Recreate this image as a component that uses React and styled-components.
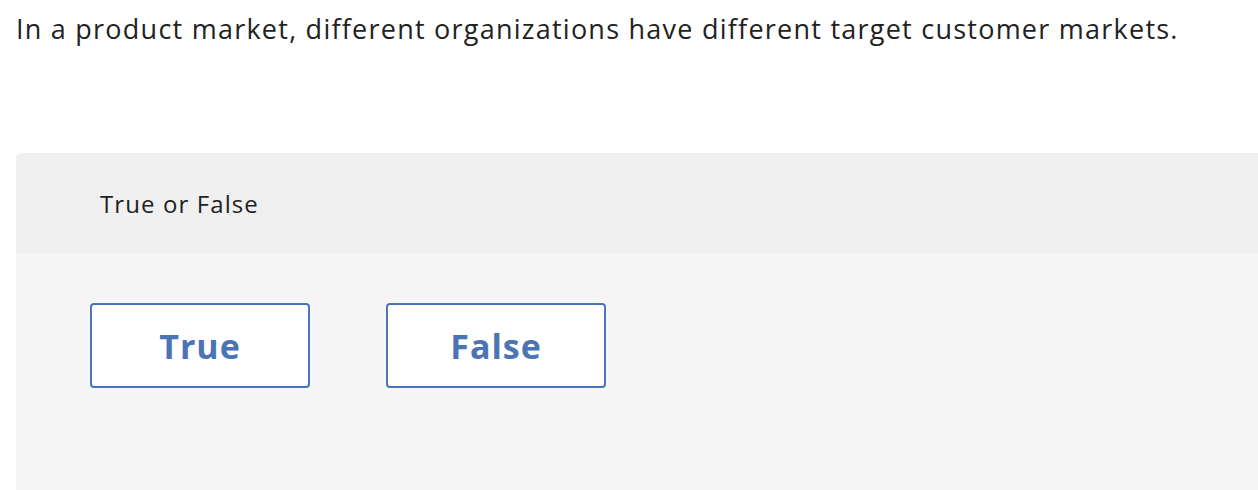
import React from 'react';
import styled, { createGlobalStyle } from 'styled-components';

const GlobalStyle = createGlobalStyle`
    html, body {
        margin: 0;
        padding: 0;
        background: #ffffff;
        overflow: hidden;
    }
    body {
        font-family: "Open Sans", "Liberation Sans", sans-serif;
        font-variant-ligatures: none;
        color: #222222;
    }
`;

const Page = styled.main`
    width: 1258px;
    height: 490px;
    overflow: hidden;
`;

const Prompt = styled.p`
    margin: 0;
    padding: 11px 0 0 16px;
    font-size: 27px;
    letter-spacing: 1.24px;
    line-height: 36px;
    color: #222222;
    white-space: nowrap;
`;

const Card = styled.section`
    margin: 106px 0 0 16px;
    width: 1300px;
    height: 400px;
    border-radius: 6px 0 0 0;
    overflow: hidden;
    background: #f5f5f5;
`;

const CardHeader = styled.header`
    height: 100px;
    background: #f0f0f0;
    display: flex;
    align-items: center;
    padding-left: 84px;
    font-size: 24px;
    letter-spacing: 1.1px;
    color: #222222;
`;

const Choices = styled.div`
    display: flex;
    gap: 76px;
    padding: 50px 0 0 74px;
`;

const Choice = styled.button`
    width: 220px;
    height: 85px;
    box-sizing: border-box;
    border: 2px solid #4a76b8;
    border-radius: 4px;
    background: #ffffff;
    color: #4a74b6;
    font-family: "Open Sans", "Liberation Sans", sans-serif;
    font-weight: 700;
    font-size: 34px;
    letter-spacing: 1px;
    cursor: pointer;
    padding: 0;
`;

export default function App() {
    const options = ['True', 'False'];
    return (
        <Page>
            <GlobalStyle />
            <Prompt>In a product market, different organizations have different target customer markets.</Prompt>
            <Card>
                <CardHeader>True or False</CardHeader>
                <Choices>
                    {options.map(option => <Choice key={option}>{option}</Choice>)}
                </Choices>
            </Card>
        </Page>
    );
}
